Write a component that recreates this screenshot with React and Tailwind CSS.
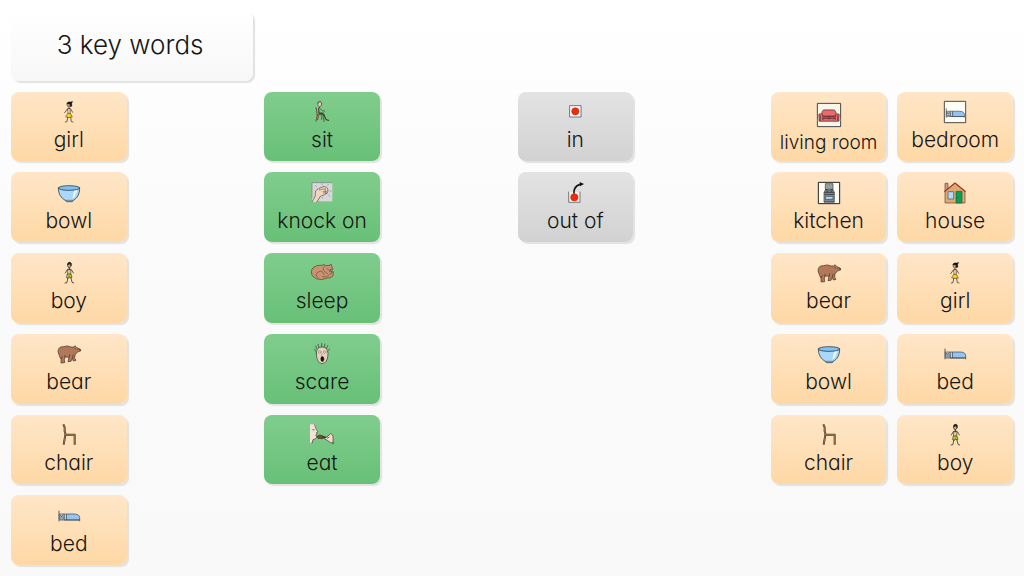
import React from 'react';
import clsx from 'clsx';

const Girl = () => (
    <g fill="none" stroke="#222" strokeWidth="2" strokeLinecap="round">
        <path d="M33 17 V22 M33 22 L28 24 L20 35 M33 22 L38 24 L44 34 M29 24 L31 38 M37 24 L36 38" />
        <path d="M30 24 H37 L35 37 H31 Z" fill="#e5bd91" stroke="none" />
        <ellipse cx="32" cy="11" rx="5" ry="6" fill="#c9a184" strokeWidth="1.5" />
        <path d="M26 8 Q29 0 38 3 L44 1 L41 8 L42 15 L37 18 L36 9 Z" fill="#111" strokeWidth="1" />
        <path d="M30 37 H37 L43 48 Q33 52 24 48 Z" fill="#f5d108" strokeWidth="1.5" />
        <path d="M29 50 L27 62 L22 63 M38 50 L40 62 L45 63" />
    </g>
);

const Boy = () => (
    <g fill="none" stroke="#222" strokeWidth="2.2" strokeLinecap="round">
        <ellipse cx="34" cy="10" rx="5" ry="7" fill="#d5b196" />
        <path d="M29 8 Q28 1 34 1 Q41 1 40 8 Q34 4 29 8 Z" fill="#222" />
        <path d="M34 17 V22 M34 21 L28 23 L22 33 M34 21 L40 23 L46 33" />
        <path d="M29 23 H39 L38 37 H30 Z" fill="#e3c29b" strokeWidth="1.6" />
        <path d="M29 36 H39 L42 46 L36 48 L34 44 L32 49 L26 47 Z" fill="#a6c71d" strokeWidth="1.6" />
        <path d="M29 49 L27 62 L21 63 M39 48 L42 61 L47 63" />
    </g>
);

const Bowl = () => (
    <g stroke="#25323c" strokeWidth="2.2">
        <path d="M1 17 C1 36 9 48 22 55 L25 59 H43 L46 55 C58 48 65 37 65 17 Z" fill="#a9d8fb" />
        <path d="M49 25 L43 50 L51 43 L59 21 Z" fill="#eef9ff" stroke="none" />
        <ellipse cx="33" cy="18" rx="32" ry="7" fill="#7cc3f2" />
        <path d="M22 55 H46" fill="none" strokeWidth="1.5" />
    </g>
);

const Bear = () => (
    <g stroke="#43302a" strokeWidth="2" strokeLinejoin="round">
        <path d="M0 26 Q1 10 16 11 Q29 6 39 12 L48 12 L51 8 L55 13 L67 19 L68 24 L58 27 L51 36 L50 46 L54 52 L46 54 L43 46 L39 55 L30 56 L33 43 L22 42 L19 49 L20 59 L9 60 L9 49 L5 41 Z" fill="#b17859" />
        <path d="M9 48 L13 40 M20 43 L21 36 M34 43 L35 34 M43 45 L46 35 M49 17 L53 18" fill="none" />
        <circle cx="59" cy="19" r="1.4" fill="#222" stroke="none" />
        <path d="M64 19 L67 21" strokeWidth="3.5" />
    </g>
);

const Chair = () => (
    <g fill="none" strokeLinejoin="round">
        <path d="M16 1 L20 10 L20 22 L23 32 L50 32 V62 M22 33 L17 62" stroke="#46392c" strokeWidth="6" />
        <path d="M16 1 L20 10 L20 22 L23 32 L50 32 V62 M22 33 L17 62" stroke="#97764e" strokeWidth="3" />
    </g>
);

const BedShape = () => (
    <g stroke="#333f48" strokeWidth="2">
        <path d="M3 17 V49" strokeWidth="2.5" />
        <path d="M4 27 H14 Q19 25 19 30 V42 H4 Z" fill="#c1d4df" />
        <path d="M5 30 L11 34 L16 28 M5 36 H18" fill="none" />
        <path d="M19 27 H25 V45 H19 Z" fill="#f8fbfc" />
        <path d="M25 27 H49 Q65 28 65 38 V45 H25 Z" fill="#94c4f4" />
        <path d="M4 45 H65 V49" fill="none" />
    </g>
);

const Sit = () => (
    <g fill="none" strokeLinecap="round" strokeLinejoin="round">
        <path d="M15 20 L19 42 L15 61 M18 41 H38 L39 61 M22 44 L20 56 M33 43 L32 55" stroke="#744a35" strokeWidth="3" />
        <path d="M27 17 L23 22 L24 37 L38 39 L45 56 L53 58" stroke="#18382b" strokeWidth="3" />
        <path d="M26 22 L34 29 L41 30 M25 35 L38 36" stroke="#244c37" strokeWidth="2" />
        <ellipse cx="26" cy="9" rx="6" ry="8" fill="#eac8b0" stroke="#3c302a" strokeWidth="1.5" />
        <path d="M20 8 Q21 0 29 2" stroke="#544034" strokeWidth="2" />
    </g>
);

const Knock = () => (
    <g stroke="#484848" strokeWidth="2" strokeLinejoin="round">
        <path d="M3 2 H64 V58 H3 Z" fill="#d7d9d8" stroke="none" />
        <path d="M3 48 V2 H64" fill="none" stroke="#777" />
        <path d="M3 60 L13 41 Q10 24 23 20 L36 14 Q49 13 51 24 Q53 34 41 38 L28 43 L17 61" fill="#f3d4bd" />
        <path d="M32 21 Q39 19 41 25 M35 29 H47 M36 33 H46 M24 24 L32 23 M42 18 L45 35" fill="none" strokeWidth="1.6" />
        <path d="M33 10 V4 M17 15 L13 10 M49 11 L53 6 M56 27 H62 M52 38 L57 44 M35 46 V50" fill="none" stroke="#888" />
    </g>
);

const Sleep = () => (
    <g stroke="#513e36" strokeWidth="2" strokeLinejoin="round" strokeLinecap="round">
        <path d="M6 18 Q15 8 35 10 L39 7 L44 11 L57 10 L60 6 L63 15 Q68 23 60 31 L67 29 L66 42 Q59 49 49 48 Q31 57 15 50 Q-1 42 1 30 Q1 22 6 18 Z" fill="#c79372" />
        <path d="M40 13 Q31 22 43 30 L50 35 M21 47 Q9 37 22 30 Q36 23 40 39 M35 44 Q48 47 56 37 L61 35 M48 20 L53 23 M57 23 L62 21" fill="none" strokeWidth="1.6" />
        <circle cx="57" cy="27" r="2" fill="#2f2523" stroke="none" />
    </g>
);

const Scare = () => (
    <g stroke="#333c34" strokeWidth="2" strokeLinecap="round">
        <path d="M14 25 L11 19 M18 18 L14 9 M24 14 L21 4 M32 11 L32 1 M39 13 L42 3 M46 17 L50 8 M50 24 L56 18" />
        <path d="M16 30 Q17 12 33 12 Q49 12 51 30 Q51 52 41 59 Q33 65 25 59 Q16 50 16 30 Z" fill="#ead0bc" />
        <circle cx="26" cy="27" r="4" fill="#fff" strokeWidth="1" />
        <circle cx="41" cy="27" r="4" fill="#fff" strokeWidth="1" />
        <path d="M26 27 h.1 M41 27 h.1" />
        <path d="M33 32 L31 37" fill="none" strokeWidth="1" />
        <ellipse cx="34" cy="48" rx="5" ry="8" fill="#111" strokeWidth="1" />
    </g>
);

const Eat = () => (
    <g stroke="#38352f" strokeWidth="2" strokeLinejoin="round">
        <path d="M-3 1 H12 L16 14 L21 23 L16 26 L18 31 L13 34 L17 37 L15 44 L6 48 L4 55 L-3 58 Z" fill="#f6e1d9" stroke="none" />
        <path d="M10 1 L13 8 L15 15 L21 23 L16 26 L19 30 L14 34 L18 38 L14 44 L6 47 L3 58 M4 17 L11 18" fill="none" />
        <path d="M18 37 L26 33 L37 36 L41 41 L32 44 L21 43 Z" fill="#79501c" />
        <path d="M34 39 L55 41" strokeWidth="4" />
        <path d="M40 44 L50 37 L59 29 Q68 31 66 43 L66 57 L59 56 L49 49 Z" fill="#f4ddd0" />
        <path d="M66 54 L67 61 M48 43 L55 39" fill="none" />
    </g>
);

const In = () => (
    <g>
        <path d="M17 14 H51 V48 H17 Z" fill="#fff" stroke="#444" strokeWidth="2.2" />
        <circle cx="34" cy="31" r="11" fill="#fb2607" stroke="#84301e" strokeWidth="1.5" />
    </g>
);

const OutOf = () => (
    <g fill="none">
        <path d="M15 30 H47 V61 H15 Z" fill="#eee" />
        <path d="M14 29 V61 H48 V29" stroke="#555" strokeWidth="2.2" />
        <path d="M30 35 Q28 13 48 7" stroke="#111" strokeWidth="5" />
        <path d="M47 0 L60 6 L48 13 Z" fill="#111" />
        <circle cx="31" cy="46" r="11" fill="#fb2607" stroke="#84301e" strokeWidth="1.5" />
    </g>
);

const LivingRoom = () => (
    <g stroke="#44282b" strokeWidth="2" strokeLinejoin="round">
        <path d="M1 1 H65 V65 H1 Z" fill="#faf6ea" stroke="#373737" strokeWidth="2.5" />
        <path d="M2 45 H64 V50 H2 Z" fill="#d8d5ca" stroke="none" />
        <path d="M13 34 Q13 20 19 19 H46 Q53 20 53 34 V45 H13 Z" fill="#ed6a6b" />
        <path d="M5 31 Q15 27 16 36 H51 Q52 27 61 31 L60 50 H6 Z" fill="#f46e70" />
        <path d="M16 36 V47 M50 36 V47 M33 36 V45 M16 43 H50 M9 34 V48 M57 34 V48" fill="none" />
        <path d="M17 36 H49 V40 H17 Z" fill="#71363a" stroke="none" />
    </g>
);

const Bedroom = () => (
    <g>
        <path d="M1 1 H65 V65 H1 Z" fill="#fffdf3" stroke="#3d4140" strokeWidth="2.8" />
        <g transform="translate(4 7) scale(.88)">
            <BedShape />
        </g>
    </g>
);

const Kitchen = () => (
    <g stroke="#3b4043" strokeWidth="2">
        <path d="M1 1 H65 V65 H1 Z" fill="#fffdf3" stroke="#202424" strokeWidth="3" />
        <path d="M22 5 H45 V22 H22 Z" fill="#989da0" />
        <path d="M18 31 L22 24 H45 L49 31 V61 H18 Z" fill="#8b9294" />
        <path d="M19 31 H49 M19 37 H49 M21 23 H28 M38 23 H46 M25 28 H31 M38 28 H43" strokeWidth="3" />
        <path d="M22 43 H45 V52 H22 Z" fill="#b4d5f4" />
        <path d="M19 58 H48" />
    </g>
);

const House = () => (
    <g stroke="#5f4229" strokeWidth="2">
        <path d="M3 4 H12 V28 H3 Z" fill="#c99e6e" />
        <path d="M3 28 L33 3 L63 28 V63 H3 Z" fill="#dfaa70" />
        <path d="M1 29 L33 3 L65 29" fill="none" stroke="#a43d2d" strokeWidth="4" />
        <path d="M12 29 H29 V51 H12 Z" fill="#b5d9fb" stroke="#444e57" />
        <path d="M36 28 H54 V63 H36 Z" fill="#08a154" stroke="#225c3b" />
        <circle cx="39" cy="47" r="1.5" fill="#183f29" stroke="none" />
    </g>
);

const tones = {
    noun: 'from-[#ffe6c8] to-[#fed8a5]',
    verb: 'from-[#80cd8d] to-[#68c077]',
    place: 'from-[#e3e3e3] to-[#d2d2d2]',
};

const words = [
    { label: 'girl', Icon: Girl, tone: 'noun', cell: 'col-start-1 row-start-2' },
    { label: 'bowl', Icon: Bowl, tone: 'noun', cell: 'col-start-1 row-start-3' },
    { label: 'boy', Icon: Boy, tone: 'noun', cell: 'col-start-1 row-start-4' },
    { label: 'bear', Icon: Bear, tone: 'noun', cell: 'col-start-1 row-start-5' },
    { label: 'chair', Icon: Chair, tone: 'noun', cell: 'col-start-1 row-start-6' },
    { label: 'bed', Icon: BedShape, tone: 'noun', cell: 'col-start-1 row-start-7' },
    { label: 'sit', Icon: Sit, tone: 'verb', cell: 'col-start-3 row-start-2' },
    { label: 'knock on', Icon: Knock, tone: 'verb', cell: 'col-start-3 row-start-3' },
    { label: 'sleep', Icon: Sleep, tone: 'verb', cell: 'col-start-3 row-start-4' },
    { label: 'scare', Icon: Scare, tone: 'verb', cell: 'col-start-3 row-start-5' },
    { label: 'eat', Icon: Eat, tone: 'verb', cell: 'col-start-3 row-start-6' },
    { label: 'in', Icon: In, tone: 'place', cell: 'col-start-5 row-start-2' },
    { label: 'out of', Icon: OutOf, tone: 'place', cell: 'col-start-5 row-start-3' },
    { label: 'living room', Icon: LivingRoom, tone: 'noun', cell: 'col-start-7 row-start-2', long: true },
    { label: 'kitchen', Icon: Kitchen, tone: 'noun', cell: 'col-start-7 row-start-3' },
    { label: 'bear', Icon: Bear, tone: 'noun', cell: 'col-start-7 row-start-4' },
    { label: 'bowl', Icon: Bowl, tone: 'noun', cell: 'col-start-7 row-start-5' },
    { label: 'chair', Icon: Chair, tone: 'noun', cell: 'col-start-7 row-start-6' },
    { label: 'bedroom', Icon: Bedroom, tone: 'noun', cell: 'col-start-8 row-start-2' },
    { label: 'house', Icon: House, tone: 'noun', cell: 'col-start-8 row-start-3' },
    { label: 'girl', Icon: Girl, tone: 'noun', cell: 'col-start-8 row-start-4' },
    { label: 'bed', Icon: BedShape, tone: 'noun', cell: 'col-start-8 row-start-5' },
    { label: 'boy', Icon: Boy, tone: 'noun', cell: 'col-start-8 row-start-6' },
];

const WordCard = ({ label, Icon, tone, cell, long }) => (
    <button
        type="button"
        className={clsx(
            'flex flex-col items-center justify-center rounded-lg bg-linear-to-b shadow-[2px_2px_1px_#e2e2e2]',
            long ? 'gap-1 pt-1' : 'gap-[5px]',
            tones[tone],
            cell
        )}
    >
        <svg viewBox="0 0 66 66" aria-hidden="true" className={clsx('overflow-visible', long ? 'size-6' : 'size-[22px]')}>
            <Icon />
        </svg>
        <span className={clsx('leading-6 whitespace-nowrap', long ? 'text-[19px]' : 'text-[21px]')}>{label}</span>
    </button>
);

const App = () => {
    return (
        <main className="grid min-h-screen auto-rows-fr grid-cols-8 grid-rows-7 gap-[11px] bg-linear-to-b from-white via-[#fafafa] to-[#f9f9f9] p-[11px] font-['Inter',sans-serif] font-light text-[#161616] [font-feature-settings:'cv11']">
            <h1 className="col-span-2 col-start-1 row-start-1 flex items-center justify-center rounded-lg bg-linear-to-b from-white to-[#f7f7f7] pr-1 pb-0.5 text-[26px] leading-8 shadow-[2px_2px_1px_#e2e2e2]">
                3 key words
            </h1>
            {words.map((word) => (
                <WordCard key={word.cell} {...word} />
            ))}
        </main>
    );
};

export default App;
